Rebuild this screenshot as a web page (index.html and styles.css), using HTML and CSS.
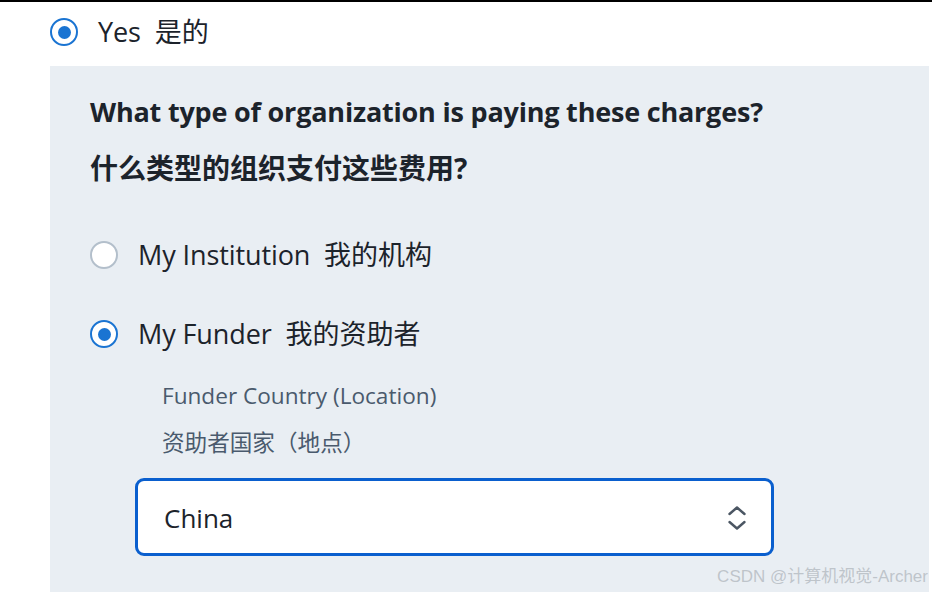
FILE: index.html
```html
<!DOCTYPE html>
<html>
<head>
<meta charset="utf-8">
<link rel="stylesheet" href="styles.css">
</head>
<body>
<div class="page">
  <div class="option option-top">
    <span class="radio checked"></span>
    <span class="label">Yes&nbsp; <span class="zh">是的</span></span>
  </div>
  <div class="panel">
    <h2 class="q">What type of organization is paying these charges?</h2>
    <h2 class="q q-zh">什么类型的组织支付这些费用?</h2>
    <div class="option opt-inst">
      <span class="radio"></span>
      <span class="label">My Institution&nbsp; <span class="zh">我的机构</span></span>
    </div>
    <div class="option opt-fund">
      <span class="radio checked"></span>
      <span class="label">My Funder&nbsp; <span class="zh">我的资助者</span></span>
    </div>
    <div class="field">
      <div class="field-label">Funder Country (Location)</div>
      <div class="field-label field-label-zh">资助者国家（地点）</div>
      <div class="select">
        <span class="select-value">China</span>
        <svg class="chev" width="20" height="28" viewBox="0 0 20 28" aria-hidden="true">
          <path d="M2.5 10 L10 3.5 L17.5 10" fill="none" stroke="#4b5663" stroke-width="2.4" stroke-linecap="round" stroke-linejoin="round"/>
          <path d="M2.5 18 L10 24.5 L17.5 18" fill="none" stroke="#4b5663" stroke-width="2.4" stroke-linecap="round" stroke-linejoin="round"/>
        </svg>
      </div>
    </div>
  </div>
  <div class="watermark">CSDN @计算机视觉-Archer</div>
</div>
</body>
</html>
```
FILE: styles.css
```css
html, body {
  margin: 0;
  padding: 0;
  background: #ffffff;
}
body {
  font-family: "Open Sans", "Noto Sans CJK SC", sans-serif;
  color: #1c232b;
  overflow: hidden;
}
.page {
  position: relative;
  width: 932px;
  height: 592px;
  border-top: 2px solid #000;
  box-sizing: border-box;
  overflow: hidden;
}
.option {
  display: flex;
  align-items: center;
  gap: 20px;
}
.option-top {
  padding-left: 50px;
  height: 60px;
}
.label {
  font-size: 27px;
  line-height: 32px;
  letter-spacing: -0.1px;
}
.zh {
  font-size: 27px;
  letter-spacing: 0;
}
.radio {
  flex: none;
  width: 28px;
  height: 28px;
  box-sizing: border-box;
  border-radius: 50%;
  border: 2.5px solid #b3bfcb;
  background: #fff;
  display: flex;
  align-items: center;
  justify-content: center;
}
.radio.checked {
  border-color: #1a74d2;
}
.radio.checked::after {
  content: "";
  width: 13px;
  height: 13px;
  border-radius: 50%;
  background: #1a74d2;
}
.panel {
  margin-left: 50px;
  margin-top: 4px;
  width: 879px;
  height: 540px;
  background: #e9eef3;
  padding: 29px 0 0 40px;
  box-sizing: border-box;
}
.q {
  margin: 0;
  font-size: 27px;
  font-weight: 700;
  line-height: 34px;
  letter-spacing: -0.2px;
}
.q-zh {
  margin-top: 22px;
  font-size: 28px;
  letter-spacing: 0;
}
.opt-inst {
  margin-top: 53px;
  height: 34px;
}
.opt-fund {
  margin-top: 45px;
  height: 34px;
}
.field {
  margin-top: 30px;
  padding-left: 45px;
}
.field-label {
  font-size: 22.6px;
  line-height: 30px;
  color: #4a5a6d;
  padding-left: 27px;
}
.field-label-zh {
  margin-top: 17px;
}
.select {
  margin-top: 20px;
  width: 639px;
  height: 78px;
  box-sizing: border-box;
  border: 3px solid #0a5fce;
  border-radius: 9px;
  background: #fff;
  display: flex;
  align-items: center;
  justify-content: space-between;
  padding: 2px 24px 0 26px;
}
.select-value {
  font-size: 26px;
  color: #1c232b;
}
.chev {
  display: block;
}
.watermark {
  position: absolute;
  right: 4px;
  bottom: 5px;
  font-family: "Liberation Sans", "Noto Sans CJK SC", sans-serif;
  font-size: 17px;
  color: rgba(188, 194, 200, 0.95);
}
```
